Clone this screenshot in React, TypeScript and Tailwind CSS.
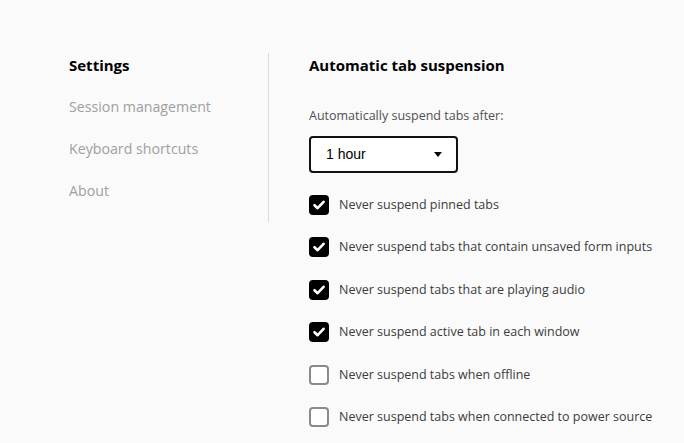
import React from "react";

const font = { fontFamily: '"Open Sans", "Noto Sans", sans-serif' };

const navItems = ["Session management", "Keyboard shortcuts", "About"];

const options = [
  { label: "Never suspend pinned tabs", checked: true },
  { label: "Never suspend tabs that contain unsaved form inputs", checked: true },
  { label: "Never suspend tabs that are playing audio", checked: true },
  { label: "Never suspend active tab in each window", checked: true },
  { label: "Never suspend tabs when offline", checked: false },
  { label: "Never suspend tabs when connected to power source", checked: false },
];

const Checkbox = ({ checked }: { checked: boolean }) =>
  checked ? (
    <span className="flex h-5 w-5 shrink-0 items-center justify-center rounded-[4px] bg-black">
      <svg width="14" height="14" viewBox="0 0 14 14">
        <path
          d="M2.5 7.2 L5.6 10.2 L11.6 3.8"
          fill="none"
          stroke="white"
          strokeWidth="2.6"
          strokeLinecap="round"
          strokeLinejoin="round"
        />
      </svg>
    </span>
  ) : (
    <span className="h-5 w-5 shrink-0 rounded-[4px] border-2 border-[#8a8a8a] bg-white" />
  );

export default function App() {
  return (
    <div className="flex min-h-[443px] w-full bg-[#fafafa] pt-[53px]" style={font}>
      <nav className="flex w-[268px] shrink-0 flex-col self-start pl-[69px]">
        <h2 className="text-[15px] font-bold leading-[24px] text-black">Settings</h2>
        {navItems.map((item) => (
          <a key={item} className="mt-[18px] text-[14.2px] leading-[24px] text-[#a0a0a0]">
            {item}
          </a>
        ))}
      </nav>
      <div className="h-[169px] w-px bg-[#dcdcdc]" />
      <main className="flex flex-col pl-10">
        <h1 className="text-[15px] font-bold leading-[24px] text-black">
          Automatic tab suspension
        </h1>
        <label className="mt-[30px] text-[12.5px] leading-[18px] text-[#505050]">
          Automatically suspend tabs after:
        </label>
        <div
          className="mt-[11px] flex h-[37px] w-[149px] items-center justify-between rounded-[4px] border-2 border-[#111] bg-white pl-[15px] pr-[14px] text-[14px] text-black"
          style={{ fontFamily: '"Liberation Sans", Arial, sans-serif' }}
        >
          <span>1 hour</span>
          <svg width="8" height="5" viewBox="0 0 8 5">
            <path d="M0 0 L8 0 L4 5 Z" fill="black" />
          </svg>
        </div>
        <ul className="mt-[22px] flex flex-col gap-[22.4px]">
          {options.map((opt) => (
            <li key={opt.label} className="flex h-5 items-center gap-[10px]">
              <Checkbox checked={opt.checked} />
              <span className="text-[12.5px] leading-[18px] text-[#3c3c3c]">{opt.label}</span>
            </li>
          ))}
        </ul>
      </main>
    </div>
  );
}
